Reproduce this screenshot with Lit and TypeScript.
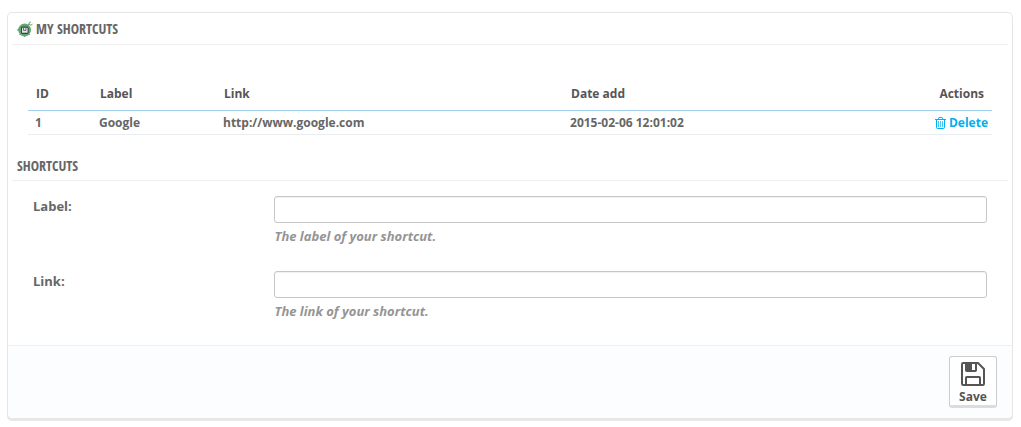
import { LitElement, html, css, svg } from "lit";
import { customElement, state } from "lit/decorators.js";

interface Shortcut {
  id: number;
  label: string;
  link: string;
  dateAdd: string;
}

const badgeIcon = svg`
  <path d="M11 4.4 12.8 2.8" stroke="#4f9a5f" stroke-width="1.2" fill="none"/>
  <path d="M11.8 2.6q.4-1.8 2-1.4M13 4.2q1.8.2 2.4-1.4" stroke="#5aa36a" fill="none"/>
  <circle cx="7.6" cy="9" r="6.4" fill="#5fa870"/>
  <path d="M0 9h2M7.6 14.5V16M2.4 13.8l1-1M12.8 13.8l-1-1" stroke="#5aa36a"/>
  <rect x="4" y="5.5" width="7.6" height="7.4" rx="1.6" fill="#3c3e42"/>
  <rect x="5" y="6.8" width="5.6" height="5" rx=".6" fill="#e9e4ea"/>
  <path d="M6.5 7v2.4h2.4V7" stroke="#6b6870" fill="none"/>`;

const trashIcon = svg`
  <g fill="none" stroke="#00aff0">
    <path d="M0 2.5h11M3.5 2.5V1.2q0-.7.7-.7h2.6q.7 0 .7.7v1.3"/>
    <path d="M1.5 2.5v8q0 1 1 1h6q1 0 1-1v-8"/>
    <path d="M3.5 4v6M5.5 4v6M7.5 4v6" stroke-opacity=".7"/>
  </g>`;

const saveIcon = svg`
  <g fill="none" stroke="#555" stroke-width="2" stroke-linejoin="round">
    <path d="M2.2 1H17l6 6v14.8q0 1.2-1.2 1.2H2.2Q1 23 1 21.8V2.2Q1 1 2.2 1z"/>
    <path d="M5 23v-7.2q0-.8.8-.8h12.4q.8 0 .8.8V23"/>
    <path d="M5 1v7.2q0 .8.8.8h8.4q.8 0 .8-.8V1"/>
  </g>
  <path d="M5 1h6v8H5z" fill="#555"/>`;

@customElement("app-root")
export class AppRoot extends LitElement {
  static styles = css`
    :host {
      display: block;
      padding: 12px 8px 8px 7px;
      background: #fff;
      color: #666;
      font: 700 12px/16px "Open Sans", "Noto Sans", sans-serif;
    }
    * {
      box-sizing: border-box;
    }
    .panel {
      border: 1px solid #e6e6e6;
      border-radius: 5px;
      background: #fff;
      box-shadow: 0 2px 0 #e8e8e8;
    }
    .heading {
      display: flex;
      align-items: center;
      gap: 3px;
      height: 32px;
      margin: 0 4px;
      padding: 0 5px;
      border-bottom: 1px solid #eee;
      color: #666;
      font: 400 14px/16px "Open Sans Condensed", "Roboto Condensed", "Open Sans", sans-serif;
      text-transform: uppercase;
    }
    .list {
      padding: 32px 20px 0;
    }
    .table {
      width: 100%;
      border-collapse: separate;
      border-spacing: 0;
      table-layout: fixed;
    }
    .table th {
      height: 34px;
      padding: 0 8px;
      border-bottom: 1px solid #a0d0eb;
      color: #555;
      text-align: left;
    }
    .table td {
      height: 24px;
      padding: 0 7px;
      border-bottom: 1px solid #eaedef;
    }
    .table .actions {
      text-align: right;
    }
    .table td.actions {
      padding-right: 4px;
    }
    .c-id {
      width: 64px;
    }
    .c-label {
      width: 124px;
    }
    .c-link {
      width: 36%;
    }
    .delete {
      display: inline-flex;
      align-items: center;
      gap: 3px;
      color: #00aff0;
      text-decoration: none;
      vertical-align: middle;
    }
    .icon {
      display: block;
      flex: none;
    }
    .section {
      height: 30px;
      margin-top: 16px;
    }
    .fields {
      display: grid;
      gap: 27px;
      padding: 15px 25px 26px;
    }
    .field {
      display: grid;
      grid-template-columns: 25% 1fr;
      column-gap: 2px;
    }
    .field label {
      padding-top: 2px;
      font-size: 13px;
    }
    .text {
      display: block;
      width: 100%;
      height: 27px;
      padding: 0 8px;
      border: 1px solid #c7c7c7;
      border-radius: 3px;
      background: #fff;
      box-shadow: inset 0 1px 1px #f0f0f0;
      color: #555;
      font: inherit;
    }
    .help {
      margin: 5px 0 0;
      padding-left: 1px;
      color: #959595;
      font-size: 13px;
      font-style: italic;
    }
    .footer {
      display: flex;
      justify-content: flex-end;
      padding: 10px 15px;
      border-top: 1px solid #eee;
      border-radius: 0 0 5px 5px;
      background: #fcfdfe;
    }
    .save {
      display: flex;
      flex-direction: column;
      align-items: center;
      gap: 3px;
      min-width: 48px;
      height: 52px;
      padding: 5px 8px 0;
      border: 1px solid #ccc;
      border-bottom: 3px solid #dcdcdc;
      border-radius: 3px;
      background: #fff;
      color: #555;
      font: inherit;
    }
  `;

  @state() private shortcuts: Shortcut[] = [
    { id: 1, label: "Google", link: "http://www.google.com", dateAdd: "2015-02-06 12:01:02" },
  ];

  private remove(event: Event, id: number) {
    event.preventDefault();
    this.shortcuts = this.shortcuts.filter((item) => item.id !== id);
  }

  private renderField(id: string, label: string, help: string) {
    return html`
      <div class="field">
        <label for=${id}>${label}</label>
        <div>
          <input class="text" type="text" id=${id} name=${id} aria-describedby="${id}-help" />
          <p class="help" id="${id}-help">${help}</p>
        </div>
      </div>
    `;
  }

  render() {
    return html`
      <form class="panel" @submit=${(e: Event) => e.preventDefault()}>
        <div class="heading">
          <svg class="icon" width="16" height="16" viewBox="0 0 16 16" aria-hidden="true">${badgeIcon}</svg>
          <span>My shortcuts</span>
        </div>
        <div class="list">
          <table class="table">
            <thead>
              <tr>
                <th class="c-id">ID</th>
                <th class="c-label">Label</th>
                <th class="c-link">Link</th>
                <th>Date add</th>
                <th class="actions">Actions</th>
              </tr>
            </thead>
            <tbody>
              ${this.shortcuts.map(
                (item) => html`
                  <tr>
                    <td>${item.id}</td>
                    <td>${item.label}</td>
                    <td>${item.link}</td>
                    <td>${item.dateAdd}</td>
                    <td class="actions">
                      <a class="delete" href="#" @click=${(e: Event) => this.remove(e, item.id)}>
                        <svg class="icon" width="11" height="12" viewBox="0 0 11 12" aria-hidden="true">${trashIcon}</svg>
                        <span>Delete</span>
                      </a>
                    </td>
                  </tr>
                `
              )}
            </tbody>
          </table>
        </div>
        <div class="heading section"><span>Shortcuts</span></div>
        <div class="fields">
          ${this.renderField("label", "Label:", "The label of your shortcut.")}
          ${this.renderField("link", "Link:", "The link of your shortcut.")}
        </div>
        <div class="footer">
          <button class="save" type="submit">
            <svg class="icon" width="24" height="24" viewBox="0 0 24 24" aria-hidden="true">${saveIcon}</svg>
            <span>Save</span>
          </button>
        </div>
      </form>
    `;
  }
}
